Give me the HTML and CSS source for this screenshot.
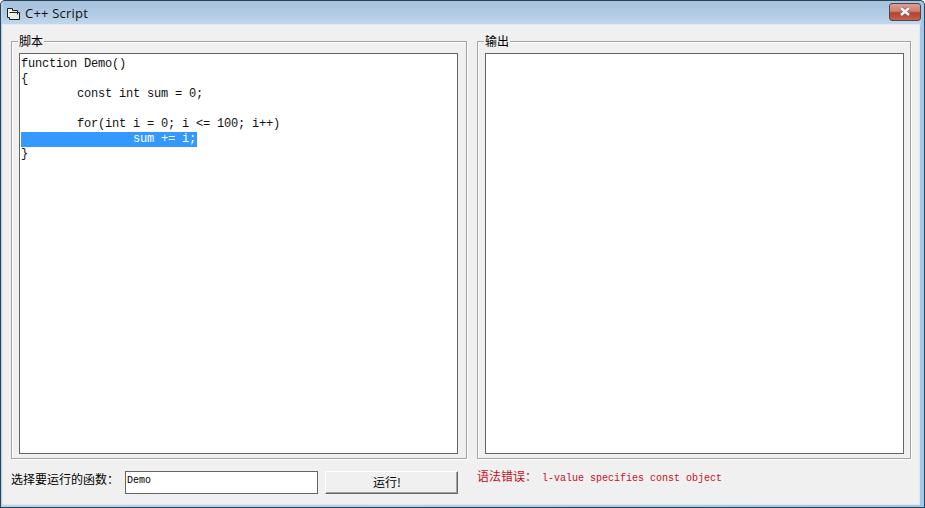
FILE: index.html
```html
<!DOCTYPE html>
<html lang="zh-CN">
<head>
<meta charset="utf-8">
<title>C++ Script</title>
<link rel="stylesheet" href="styles.css">
</head>
<body>
<div class="window">
  <header class="titlebar">
    <svg class="app-icon" width="13" height="12" viewBox="0 0 13 12">
      <path d="M.5.500h5v2h5v2h2v7H2.500v-2h-2z" fill="#f4f3d8" stroke="#16202c"/>
      <path d="M2.500 4.500h8v5" fill="none" stroke="#16202c"/>
      <path d="M3.500 6.500h8v4h-8z" fill="#e9efe0"/>
    </svg>
    <span class="title">C++ Script</span>
    <button class="close" type="button" aria-label="关闭">
      <svg width="16" height="11" viewBox="0 0 16 11">
        <path d="M4 2l8 7M12 2l-8 7" stroke="#7d5a58" stroke-width="4" fill="none"/>
        <path d="M4 2l8 7M12 2l-8 7" stroke="#f6f3f3" stroke-width="2.600" fill="none"/>
      </svg>
    </button>
  </header>
  <main class="client">
    <div class="panels">
      <section class="group group-script">
        <span class="legend">脚本</span>
        <div class="pane code"><div class="line">function Demo()</div><div class="line">{</div><div class="line">	const int sum = 0;</div><div class="line">&nbsp;</div><div class="line">	for(int i = 0; i &lt;= 100; i++)</div><div class="line"><span class="selected">		sum += i;</span></div><div class="line">}</div></div>
      </section>
      <section class="group group-output">
        <span class="legend">输出</span>
        <div class="pane"></div>
      </section>
    </div>
    <footer class="controls">
      <label class="prompt" for="fn">选择要运行的函数：</label>
      <input class="fn-input" id="fn" type="text" value="Demo">
      <button class="run" type="button">运行!</button>
      <p class="error"><span class="error-label">语法错误：</span> l-value specifies const object</p>
    </footer>
  </main>
</div>
</body>
</html>
```
FILE: styles.css
```css
* { box-sizing: border-box; }
html, body { margin: 0; padding: 0; }
body {
  width: 925px;
  height: 508px;
  overflow: hidden;
  font-family: "Noto Sans CJK SC", "Liberation Sans", sans-serif;
  font-size: 12px;
  color: #000;
}
.window {
  width: 925px;
  height: 508px;
  display: flex;
  flex-direction: column;
  padding: 0 5px 3px 2px;
  background: linear-gradient(90deg, #bcd4ea 0%, #b4cfe8 50%, #a2c6e6 100%);
  border: 1px solid #2a4356;
  border-bottom-color: #1f4358;
  border-radius: 5px 5px 0 0;
}
.titlebar {
  height: 24px;
  flex: none;
  display: flex;
  align-items: center;
  margin: 0 -2px 0 0;
  padding: 0 0 0 4px;
  background: linear-gradient(180deg, #a6c2de 0%, #b2cbe4 55%, #c3d8ec 100%);
}
.app-icon { margin-top: 2px; }
.title {
  margin-left: 5px;
  font-family: "Open Sans", "Liberation Sans", sans-serif;
  font-size: 13px;
  letter-spacing: 0.2px;
  color: #111;
}
.close {
  margin-left: auto;
  width: 32px;
  height: 18px;
  margin-top: -3px;
  padding: 0;
  display: flex;
  align-items: center;
  justify-content: center;
  border: 1px solid #4b4650;
  border-radius: 3px;
  background: linear-gradient(180deg, #dc9f94 0%, #d0806f 45%, #b5412f 55%, #c4604d 100%);
}
.client {
  flex: 1;
  min-height: 0;
  display: flex;
  flex-direction: column;
  padding: 16px 0 0 8px;
  background: #f0f0f0;
  box-shadow: 0 0 0 1px #dfe8f1;
}
.panels {
  display: flex;
  gap: 10px;
  height: 418px;
}
.group {
  position: relative;
  height: 100%;
  border: 1px solid #a3a3a3;
  box-shadow: inset 1px 1px 0 #fff, 1px 1px 0 #fff;
  padding: 11px 0 4px 7px;
}
.group-script { width: 456px; padding-right: 8px; }
.group-output { width: 434px; padding-right: 6px; }
.legend {
  position: absolute;
  left: 6px;
  top: -9px;
  padding: 0 1px;
  line-height: 15px;
  background: #f0f0f0;
}
.pane {
  height: 100%;
  background: #fff;
  border: 1px solid #646464;
}
.code {
  padding: 3px 0 0 1px;
  font-family: "Liberation Mono", "DejaVu Sans Mono", monospace;
  font-size: 12px;
  letter-spacing: -0.2px;
  line-height: 15px;
  white-space: pre;
  tab-size: 8;
  color: #111;
}
.line { height: 15px; }
.selected {
  display: inline-block;
  height: 15px;
  padding-right: 1px;
  vertical-align: top;
  background: #3399ff;
  color: #fff;
}
.controls {
  display: flex;
  align-items: flex-start;
  margin-top: 12px;
}
.prompt {
  width: 114px;
  line-height: 16px;
}
.fn-input {
  width: 193px;
  height: 23px;
  padding: 0 1px 4px;
  border: 1px solid #646464;
  border-radius: 0;
  background: #fff;
  outline: none;
  font-family: "Liberation Mono", monospace;
  font-size: 10px;
  color: #000;
}
.run {
  width: 133px;
  height: 23px;
  margin-left: 7px;
  padding: 0 9px 3px 0;
  background: #f0f0f0;
  border: 1px solid;
  border-color: #fff #696969 #696969 #fff;
  box-shadow: inset -1px -1px 0 #a0a0a0;
  font-family: "Noto Sans CJK SC", sans-serif;
  font-size: 12px;
  color: #000;
}
.error {
  margin: -2px 0 0 19px;
  color: #c4101c;
  font-family: "Liberation Mono", "Noto Sans CJK SC", monospace;
  font-size: 10px;
  line-height: 14px;
}
.error-label {
  margin-right: -1px;
  font-family: "Noto Sans CJK SC", sans-serif;
  font-size: 12px;
}
```
